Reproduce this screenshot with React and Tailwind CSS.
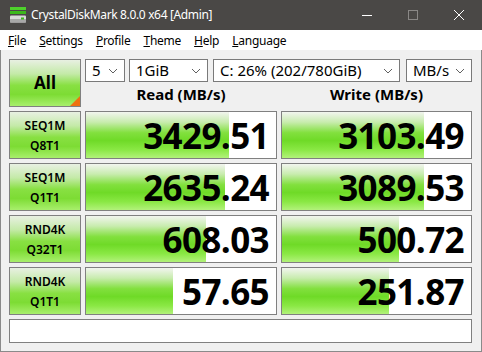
import React from 'react';

const BAR = 'bg-[linear-gradient(to_bottom,#f2f5ef_0%,#c8ecae_22%,#82e03e_45%,#6fda27_62%,#8ae844_82%,#b2f27a_100%)]';
const LABEL = 'bg-[linear-gradient(to_bottom,#e8f0e2_0%,#c4eaa8_30%,#88e042_55%,#7ddc34_75%,#a8ef6c_100%)]';

const ROWS = [
  { top: 'SEQ1M', bottom: 'Q8T1', read: '3429.51', write: '3103.49', readPct: 75.5, writePct: 75 },
  { top: 'SEQ1M', bottom: 'Q1T1', read: '2635.24', write: '3089.53', readPct: 73.4, writePct: 75 },
  { top: 'RND4K', bottom: 'Q32T1', read: '608.03', write: '500.72', readPct: 63, writePct: 62 },
  { top: 'RND4K', bottom: 'Q1T1', read: '57.65', write: '251.87', readPct: 46, writePct: 56.5 },
];

function Chevron() {
  return (
    <svg width="10" height="6" viewBox="0 0 10 6" className="shrink-0">
      <path d="M1 1 L5 5 L9 1" fill="none" stroke="#606060" strokeWidth="1" />
    </svg>
  );
}

function Combo({ label, className }) {
  return (
    <div className={`h-[23px] bg-white border border-[#7a7a7a] flex items-center justify-between pl-[6px] pr-[6px] text-[15px] text-black leading-none ${className}`}>
      <span>{label}</span>
      <Chevron />
    </div>
  );
}

function Score({ value, pct }) {
  return (
    <div className="relative h-[48px] bg-white border border-[#808080] overflow-hidden">
      <div className={`absolute left-0 top-0 bottom-0 ${BAR}`} style={{ width: `${pct}%` }} />
      <div className="relative h-full flex items-center justify-end pr-[7px] font-['Open_Sans',sans-serif] font-bold text-[35px] tracking-[-0.6px] text-black leading-none">
        {value}
      </div>
    </div>
  );
}

function Menu({ label }) {
  return (
    <span>
      <span className="underline underline-offset-[1px]">{label[0]}</span>
      {label.slice(1)}
    </span>
  );
}

export default function App() {
  return (
    <div className="w-[482px] h-[352px] flex flex-col font-['Noto_Sans',sans-serif] bg-[#f0f0f0]">
      {/* title bar */}
      <div className="h-[30px] bg-[#4a4846] flex items-center text-white shrink-0">
        <svg width="18" height="18" viewBox="0 0 18 18" className="ml-[9px] mr-[4px]">
          <rect x="1" y="1" width="16" height="3" fill="#4ed12c" />
          <rect x="1" y="5" width="16" height="3" fill="#3cb81c" />
          <rect x="1" y="9.5" width="16" height="7" rx="1" fill="#d9d9d9" />
          <rect x="1" y="13" width="16" height="3.5" fill="#a8a8a8" />
          <rect x="12" y="11.5" width="3" height="2" fill="#3cb81c" />
        </svg>
        <span className="text-[12px] tracking-[-0.35px]">CrystalDiskMark 8.0.0 x64 [Admin]</span>
        <div className="ml-auto flex items-center h-full">
          <div className="w-[46px] h-full flex items-center justify-center">
            <div className="w-[10px] h-px bg-white" />
          </div>
          <div className="w-[46px] h-full flex items-center justify-center">
            <div className="w-[10px] h-[10px] border border-[#8a8886]" />
          </div>
          <div className="w-[46px] h-full flex items-center justify-center">
            <svg width="10" height="10" viewBox="0 0 10 10">
              <path d="M0 0 L10 10 M10 0 L0 10" stroke="white" strokeWidth="1" />
            </svg>
          </div>
        </div>
      </div>

      {/* menu bar */}
      <div className="h-[20px] bg-white flex items-center gap-[13px] pl-[8px] pt-[1px] text-[12px] tracking-[-0.25px] text-black shrink-0">
        <Menu label="File" />
        <Menu label="Settings" />
        <Menu label="Profile" />
        <Menu label="Theme" />
        <Menu label="Help" />
        <Menu label="Language" />
      </div>

      {/* content */}
      <div className="flex-1 border-l border-r border-b border-[#8a8a8a] pl-[8px] pt-[9px] flex flex-col gap-[4px]">
        <div className="flex gap-[4px]">
          <div className={`relative w-[72px] h-[48px] border border-[#808080] flex items-center justify-center font-bold text-[17px] text-black ${LABEL}`}>
            All
            <div className="absolute right-0 bottom-0 w-0 h-0 border-l-[10px] border-l-transparent border-b-[10px] border-b-[#f07010]" />
          </div>
          <div className="flex flex-col">
            <div className="flex items-center">
              <Combo label="5" className="w-[40px]" />
              <Combo label="1GiB" className="w-[79px] ml-[4px]" />
              <Combo label="C: 26% (202/780GiB)" className="w-[187px] ml-[5px]" />
              <Combo label="MB/s" className="w-[66px] ml-[6px]" />
            </div>
            <div className="flex h-[25px] items-center font-bold text-[15px] text-black">
              <div className="w-[192px] text-center">Read (MB/s)</div>
              <div className="w-[191px] ml-[4px] text-center">Write (MB/s)</div>
            </div>
          </div>
        </div>

        {ROWS.map((r, i) => (
          <div key={i} className="grid grid-cols-[72px_192px_191px] gap-[4px]">
            <div className={`h-[48px] border border-[#808080] flex flex-col items-center justify-center gap-[3px] text-[12px] font-semibold text-black leading-[17px] ${LABEL}`}>
              <span>{r.top}</span>
              <span>{r.bottom}</span>
            </div>
            <Score value={r.read} pct={r.readPct} />
            <Score value={r.write} pct={r.writePct} />
          </div>
        ))}

        <div className="w-[463px] h-[24px] bg-white border border-[#808080]" />
      </div>
    </div>
  );
}
